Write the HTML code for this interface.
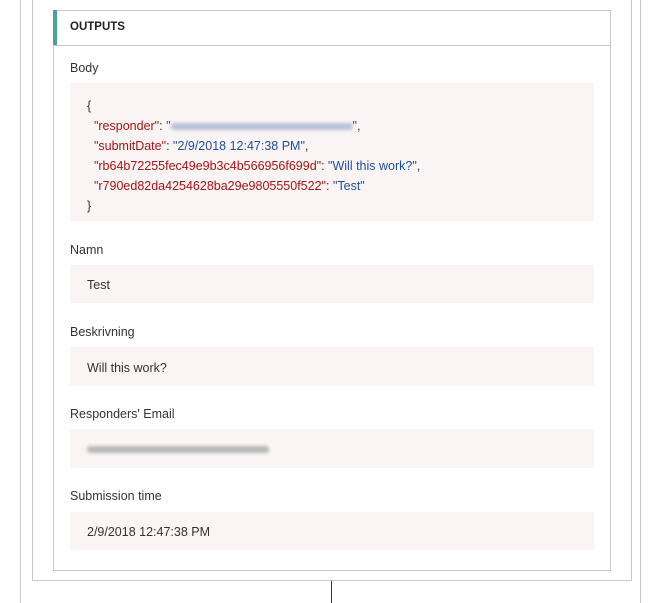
<!DOCTYPE html>
<html><head><style>
*{margin:0;padding:0;box-sizing:border-box}
body{width:664px;height:603px;background:#fff;position:relative;overflow:hidden;font-family:"Liberation Sans",sans-serif;font-size:12.5px;color:#333}
.a{position:absolute}
.lbl{position:absolute;left:70px;font-size:12.5px;color:#333}
.box{position:absolute;left:70px;width:524px;background:#faf4f4}
.v{position:absolute;left:17px;font-size:12.5px;color:#333}
.k{color:#a31515}.s{color:#1f4f9a}
.blur{display:inline-block;height:7px;background:#b9c3d6;filter:blur(1.5px);vertical-align:middle;border-radius:3px}
</style></head><body>
<div class="a" style="left:20px;top:0;width:1px;height:603px;background:#c8c8c8"></div>
<div class="a" style="left:640px;top:0;width:1px;height:603px;background:#c8c8c8"></div>
<div class="a" style="left:32px;top:0;width:600px;height:581px;border:1px solid #c8c8c8;border-top:none"></div>
<div class="a" style="left:331px;top:581px;width:1px;height:22px;background:#333"></div>
<div class="a" style="left:53px;top:10px;width:558px;height:561px;border:1px solid #c8c8c8;background:#fff"></div>
<div class="a" style="left:53px;top:10px;width:4px;height:36px;background:#4aa398"></div>
<div class="a" style="left:53px;top:45px;width:558px;height:1px;background:#c8c8c8"></div>
<div class="a" style="left:70px;top:21px;font-size:11.5px;font-weight:bold;color:#222">OUTPUTS</div>

<div class="lbl" style="top:61px">Body</div>
<div class="box" style="top:83px;height:138px">
<div style="position:absolute;left:17px;top:13px;line-height:20px;font-size:12.5px;color:#333;white-space:pre">{
  <span class="k">"responder"</span>: <span class="s">"<span class="blur" style="width:182px"></span>"</span>,
  <span class="k">"submitDate"</span>: <span class="s">"2/9/2018 12:47:38 PM"</span>,
  <span class="k">"rb64b72255fec49e9b3c4b566956f699d"</span>: <span class="s">"Will this work?"</span>,
  <span class="k">"r790ed82da4254628ba29e9805550f522"</span>: <span class="s">"Test"</span>
}</div></div>

<div class="lbl" style="top:243px">Namn</div>
<div class="box" style="top:265px;height:38px"><div class="v" style="top:13px">Test</div></div>
<div class="lbl" style="top:325px">Beskrivning</div>
<div class="box" style="top:347px;height:39px"><div class="v" style="top:14px">Will this work?</div></div>
<div class="lbl" style="top:407px">Responders' Email</div>
<div class="box" style="top:429px;height:39px"><div class="v" style="top:13px"><span class="blur" style="width:182px;background:#b8b8b8"></span></div></div>
<div class="lbl" style="top:489px">Submission time</div>
<div class="box" style="top:512px;height:38px"><div class="v" style="top:13px">2/9/2018 12:47:38 PM</div></div>
</body></html>
